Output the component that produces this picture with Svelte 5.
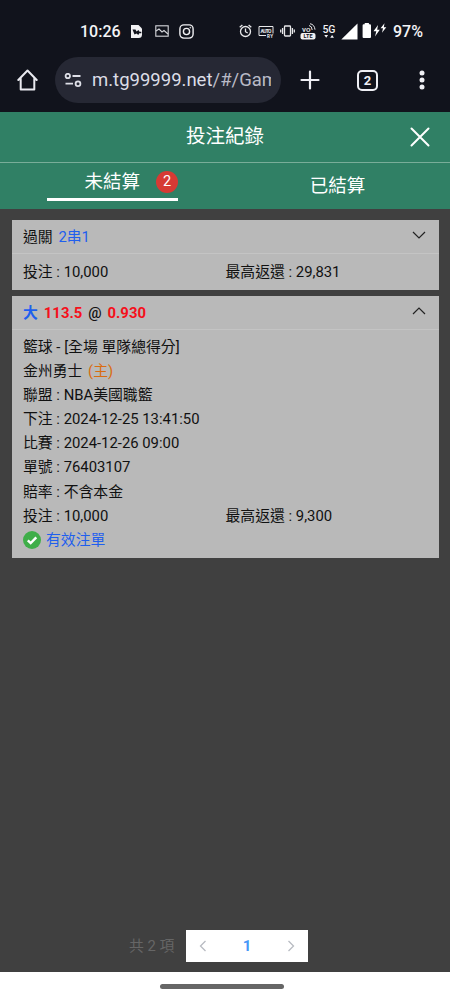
<script>
	/**
	 * @typedef {Object} Detail
	 * @property {string} label
	 * @property {string} value
	 */

	/** @type {Detail[]} */
	const details = [
		{ label: '聯盟', value: 'NBA美國職籃' },
		{ label: '下注', value: '2024-12-25 13:41:50' },
		{ label: '比賽', value: '2024-12-26 09:00' },
		{ label: '單號', value: '76403107' },
		{ label: '賠率', value: '不含本金' }
	];

	let activeTab = 'open';
	let parlayCount = 2;
	let page = 1;
</script>

<div class="screen">
	<div class="status-bar">
		<span class="clock">10:26</span>
		<svg class="s-note" width="13" height="15" viewBox="0 0 13 15">
			<path d="M1 1h7.500l3.500 3.500v6q0 3.500-3.500 3.500H1z" fill="#f1f1f3" />
			<path d="M2.500 5.500h3l1 2 2-1.500 1 1.800h1.800v1.400H9.300l-1 1.800-1.800-1.500-2 1z" fill="#11131c" />
		</svg>
		<svg class="s-image" width="14" height="12" viewBox="0 0 14 12" fill="none" stroke="#d5d6da" stroke-width="1.1">
			<rect x="0.8" y="0.8" width="12.400" height="10.400" />
			<path d="M1 6l3-2 3 3 2-1.500L13 9" />
		</svg>
		<svg class="s-insta" width="15" height="15" viewBox="0 0 15 15" fill="none" stroke="#f1f1f3" stroke-width="1.400">
			<rect x="0.9" y="0.9" width="13.200" height="13.200" rx="4" />
			<circle cx="7.500" cy="7.500" r="3.100" />
			<circle cx="11.300" cy="3.700" r="0.4" stroke-width="1" />
		</svg>
		<svg class="s-alarm" width="13" height="14" viewBox="0 0 13 14" fill="none" stroke="#e8e8ea" stroke-width="1.300">
			<circle cx="6.500" cy="7.500" r="5" />
			<path d="M6.500 4.500v3.200l2.200 1.300M0.700 3.300L3.400 1M12.300 3.300L9.600 1" />
		</svg>
		<svg class="s-auto" width="16" height="13" viewBox="0 0 16 13">
			<path d="M8 10.500H1V1.500h14v7" fill="none" stroke="#e8e8ea" />
			<text x="2.500" y="7.800" font-size="5" textLength="11" font-weight="700" fill="#e8e8ea">AUTO</text>
			<text x="9" y="12.600" font-size="4.500" textLength="6" font-weight="700" fill="#e8e8ea">RY</text>
		</svg>
		<svg class="s-vibrate" width="15" height="12" viewBox="0 0 15 12" fill="none" stroke="#e8e8ea" stroke-width="1.300">
			<rect x="4.500" y="1" width="6" height="10" rx="0.8" />
			<path d="M2.600 3v6M0.700 4.500v3M12.400 3v6M14.300 4.500v3" />
		</svg>
		<svg class="s-volte" width="16" height="17" viewBox="0 0 16 17">
			<text x="2" y="8.700" font-size="8" font-weight="500" fill="#e8e8ea">vo</text>
			<path d="M9 2.500q3 0.500 3.200 4.500M10 0.7q4.500 0.800 5 6" fill="none" stroke="#e8e8ea" stroke-width="1" />
			<rect x="0.5" y="10" width="15" height="6.500" rx="2" fill="#f1f1f3" />
			<text x="3.500" y="15.300" font-size="5.500" textLength="9" font-weight="700" fill="#11131c">LTE</text>
		</svg>
		<svg class="s-5g" width="14" height="16" viewBox="0 0 14 16" fill="#f1f1f3">
			<text x="0.500" y="9.500" font-size="10.500" font-weight="500" textLength="13">5G</text>
			<path d="M2.300 12h3.800l-1.900 2.700zM8.200 14.700H12L10.100 12z" />
		</svg>
		<svg class="s-signal" width="17" height="17" viewBox="0 0 17 17">
			<path d="M16.500 0.500v16H0.300z" fill="#fff" />
		</svg>
		<svg class="s-battery" width="25" height="16" viewBox="0 0 25 16" fill="#fff">
			<path d="M2.700 1.300V0h4.200v1.300h1q1.100 0 1.100 1.100V14q0 1-1 1H1.600q-1 0-1-1V2.400q0-1.100 1.100-1.100z" />
			<path d="M16 2l-4.500 6.200h2.800l-1.300 5.300 4.800-6.700h-2.600zM22.500 0.300l-3.900 5h2.400l-1 4.500 4.300-5.600h-2.500z" />
		</svg>
		<span class="percent">97%</span>
	</div>

	<div class="browser-bar">
		<svg class="home" width="21" height="22" viewBox="0 0 21 22" fill="none" stroke="#e9e9ef" stroke-width="2" stroke-linejoin="round" stroke-linecap="round">
			<path d="M1.300 11L10.500 1.500 19.700 11M3.700 9.300V20.500h13.600V9.300" />
		</svg>
		<div class="address">
			<svg width="18" height="14" viewBox="0 0 18 14" fill="none" stroke="#dedfe7" stroke-width="1.800">
				<circle cx="3.800" cy="3" r="2.200" />
				<circle cx="14" cy="10.700" r="2.400" />
				<path d="M8.500 3h8M1.500 10.700H9" />
			</svg>
			<span class="url">m.tg99999.net<span class="path">/#/Gam</span></span>
		</div>
		<svg class="new-tab" width="20" height="20" viewBox="0 0 20 20" stroke="#efeff4" stroke-width="2.200" stroke-linecap="round">
			<path d="M10 1.500v17M1.500 10h17" />
		</svg>
		<span class="tab-count">2</span>
		<svg class="more" width="6" height="20" viewBox="0 0 6 20" fill="#efeff4">
			<circle cx="3" cy="3" r="2.500" />
			<circle cx="3" cy="10" r="2.500" />
			<circle cx="3" cy="17" r="2.500" />
		</svg>
	</div>

	<header class="title-bar">
		<h1>投注紀錄</h1>
		<button class="close" aria-label="關閉">
			<svg width="20" height="20" viewBox="0 0 20 20" stroke="#fff" stroke-width="2" stroke-linecap="round">
				<path d="M1.500 1.500l17 17M18.500 1.500l-17 17" />
			</svg>
		</button>
	</header>

	<nav class="tabs">
		<button class="tab open" class:active={activeTab === 'open'} on:click={() => (activeTab = 'open')}>
			<span class="tab-inner">
				<span>未結算</span>
				<span class="badge">2</span>
			</span>
		</button>
		<button class="tab settled" class:active={activeTab === 'settled'} on:click={() => (activeTab = 'settled')}>
			<span class="tab-inner">已結算</span>
		</button>
	</nav>

	<main>
		<section class="bet parlay">
			<div class="bet-head">
				<span>過關 <span class="link combo">{parlayCount}串1</span></span>
				<svg width="14" height="8" viewBox="0 0 14 8" fill="none" stroke="#222" stroke-width="1.200">
					<path d="M1 1l6 6 6-6" />
				</svg>
			</div>
			<div class="bet-body">
				<div class="row split">
					<span>投注 : 10,000</span>
					<span>最高返還 : 29,831</span>
				</div>
			</div>
		</section>

		<section class="bet single">
			<div class="bet-head">
				<span class="pick">
					<span class="link">大</span>
					<span class="red">113.5</span>
					<span class="at">@</span>
					<span class="red">0.930</span>
				</span>
				<svg width="14" height="8" viewBox="0 0 14 8" fill="none" stroke="#222" stroke-width="1.200">
					<path d="M1 7l6-6 6 6" />
				</svg>
			</div>
			<div class="bet-body">
				<div class="row">籃球 - [全場 單隊總得分]</div>
				<div class="row">金州勇士 <span class="host">(主)</span></div>
				{#each details as detail}
					<div class="row">{detail.label} : {detail.value}</div>
				{/each}
				<div class="row split">
					<span>投注 : 10,000</span>
					<span>最高返還 : 9,300</span>
				</div>
				<div class="row valid">
					<svg width="18" height="18" viewBox="0 0 18 18">
						<circle cx="9" cy="9" r="9" fill="#3fae49" />
						<path d="M4.800 9.300l2.900 2.800 5.600-5.700" fill="none" stroke="#fff" stroke-width="2.400" />
					</svg>
					<span class="link">有效注單</span>
				</div>
			</div>
		</section>

		<div class="pagination">
			<span class="total">共 2 項</span>
			<div class="pager">
				<svg width="8" height="12" viewBox="0 0 8 12" fill="none" stroke="#b8bbc2" stroke-width="1.300">
					<path d="M6.500 1l-5 5 5 5" />
				</svg>
				<span class="page">{page}</span>
				<svg width="8" height="12" viewBox="0 0 8 12" fill="none" stroke="#b8bbc2" stroke-width="1.300">
					<path d="M1.500 1l5 5-5 5" />
				</svg>
			</div>
		</div>
	</main>

	<div class="gesture-bar">
		<span class="handle"></span>
	</div>
</div>

<style>
	:global(body) {
		background: #404040;
	}

	.screen {
		width: 450px;
		height: 1000px;
		display: flex;
		flex-direction: column;
		overflow: hidden;
		font-family: Roboto, 'Noto Sans CJK TC', sans-serif;
		background: #404040;
	}

	svg {
		display: block;
		flex: none;
	}

	button {
		border: none;
		background: none;
		padding: 0;
		font: inherit;
		color: inherit;
		cursor: pointer;
	}

	.status-bar {
		height: 50px;
		box-sizing: border-box;
		padding: 12px 0 0 80px;
		display: flex;
		align-items: center;
		background: #11131c;
		color: #f4f4f6;
	}

	.clock {
		width: 50px;
		font-size: 16px;
		font-weight: 500;
	}

	.s-image {
		margin-left: 12px;
	}

	.s-insta {
		margin-left: 10px;
	}

	.s-alarm {
		margin-left: 45px;
	}

	.s-auto {
		margin-left: 6px;
	}

	.s-vibrate {
		margin-left: 6px;
	}

	.s-volte {
		margin-left: 5px;
	}

	.s-5g {
		margin-left: 6px;
	}

	.s-signal {
		margin-left: 5px;
	}

	.s-battery {
		margin-left: 4px;
	}

	.percent {
		margin-left: 6px;
		font-size: 16px;
		font-weight: 500;
	}

	.browser-bar {
		height: 62px;
		box-sizing: border-box;
		padding: 7px 0 9px 17px;
		display: flex;
		align-items: center;
		background: #11131c;
	}

	.address {
		width: 226px;
		height: 46px;
		box-sizing: border-box;
		margin-left: 17px;
		padding: 0 9px;
		display: flex;
		align-items: center;
		gap: 10px;
		border-radius: 23px;
		background: #262834;
	}

	.url {
		width: 179px;
		overflow: hidden;
		white-space: nowrap;
		font-size: 18.500px;
		line-height: 28px;
		color: #dcdde6;
	}

	.path {
		color: #b9bac6;
	}

	.new-tab {
		margin-left: 19px;
	}

	.tab-count {
		width: 21px;
		height: 21px;
		box-sizing: border-box;
		margin-left: 37px;
		border: 2px solid #efeff4;
		border-radius: 5px;
		color: #efeff4;
		font-size: 13px;
		font-weight: 700;
		line-height: 17px;
		text-align: center;
	}

	.more {
		margin-left: 41px;
	}

	.title-bar {
		height: 51px;
		box-sizing: border-box;
		display: grid;
		grid-template-columns: 60px 1fr 60px;
		align-items: center;
		border-bottom: 1px solid #79ad99;
		background: #308065;
		color: #fff;
	}

	h1 {
		grid-column: 2;
		margin: 0;
		font-size: 19.500px;
		font-weight: 400;
		line-height: 28px;
		text-align: center;
	}

	.close {
		justify-self: center;
	}

	.tabs {
		height: 46px;
		display: grid;
		grid-template-columns: 1fr 1fr;
		align-items: start;
		background: #308065;
		color: #fff;
		font-size: 18.500px;
	}

	.tab {
		display: flex;
		justify-content: center;
	}

	.tab-inner {
		height: 38px;
		box-sizing: border-box;
		display: flex;
		align-items: center;
		padding-top: 7px;
		line-height: 28px;
		white-space: nowrap;
	}

	.active .tab-inner {
		width: 131px;
		padding: 2px 0 0;
		justify-content: flex-end;
		gap: 16px;
		border-bottom: 3px solid #fff;
	}

	.badge {
		width: 22px;
		height: 22px;
		border-radius: 50%;
		background: #d63a34;
		font-size: 14.500px;
		line-height: 22px;
		text-align: center;
	}

	main {
		height: 763px;
		box-sizing: border-box;
		padding: 11px 11px 10px 12px;
		display: flex;
		flex-direction: column;
		gap: 6px;
	}

	.bet {
		background: #b9b9b9;
		color: #111;
		font-size: 14.850px;
	}

	.bet-head {
		height: 34px;
		box-sizing: border-box;
		padding: 0 13px 0 11px;
		display: flex;
		align-items: center;
		justify-content: space-between;
		border-bottom: 1px solid #c4c4c4;
		line-height: 22px;
	}

	.bet-head svg {
		margin-bottom: 4px;
	}

	.parlay .bet-body {
		height: 36px;
		padding: 6px 11px 0;
		box-sizing: border-box;
	}

	.single .bet-body {
		height: 228px;
		padding: 5px 11px 0;
		box-sizing: border-box;
	}

	.row {
		height: 24.100px;
		line-height: 24.100px;
		white-space: nowrap;
	}

	.split {
		display: grid;
		grid-template-columns: 1fr 1fr;
	}

	.link {
		color: #1f5fee;
	}

	.combo {
		margin-left: 2px;
	}

	.pick {
		display: flex;
		gap: 6px;
		font-weight: 700;
	}

	.at {
		font-weight: 500;
	}

	.red {
		color: #f5101b;
	}

	.host {
		margin-left: 2px;
		color: #d96c10;
	}

	.valid {
		display: flex;
		align-items: center;
		gap: 5px;
	}

	.pagination {
		margin-top: auto;
		padding-left: 117px;
		display: flex;
		align-items: center;
		color: #666;
	}

	.total {
		width: 57px;
		padding-bottom: 3px;
		font-size: 14.800px;
		white-space: nowrap;
	}

	.pager {
		width: 122px;
		height: 32px;
		box-sizing: border-box;
		padding: 0 13px;
		display: flex;
		align-items: center;
		justify-content: space-between;
		background: #fff;
	}

	.page {
		color: #4797f7;
		font-size: 15px;
		font-weight: 700;
	}

	.gesture-bar {
		height: 28px;
		display: flex;
		align-items: center;
		justify-content: center;
		padding-right: 6px;
		background: #fff;
	}

	.handle {
		width: 124px;
		height: 5px;
		border-radius: 3px;
		background: #666;
	}
</style>
